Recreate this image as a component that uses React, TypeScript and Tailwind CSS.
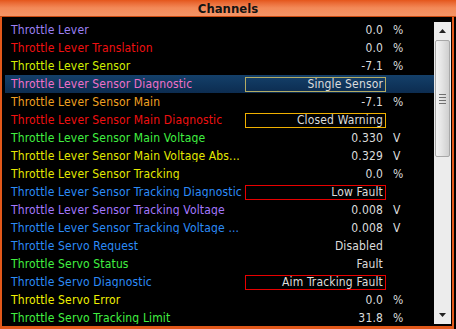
import React from "react";

type BoxTone = "khaki" | "gold" | "red";

type Row = {
  label: string;
  color: string;
  value: string;
  unit?: string;
  box?: BoxTone;
  selected?: boolean;
};

const rows: Row[] = [
  { label: "Throttle Lever", color: "text-[#9c80f4]", value: "0.0", unit: "%" },
  { label: "Throttle Lever Translation", color: "text-[#f01010]", value: "0.0", unit: "%" },
  { label: "Throttle Lever Sensor", color: "text-[#d4f000]", value: "-7.1", unit: "%" },
  { label: "Throttle Lever Sensor Diagnostic", color: "text-[#f070c8]", value: "Single Sensor", box: "khaki", selected: true },
  { label: "Throttle Lever Sensor Main", color: "text-[#f0a020]", value: "-7.1", unit: "%" },
  { label: "Throttle Lever Sensor Main Diagnostic", color: "text-[#f01010]", value: "Closed Warning", box: "gold" },
  { label: "Throttle Lever Sensor Main Voltage", color: "text-[#40f040]", value: "0.330", unit: "V" },
  { label: "Throttle Lever Sensor Main Voltage Abs...", color: "text-[#e4e800]", value: "0.329", unit: "V" },
  { label: "Throttle Lever Sensor Tracking", color: "text-[#e4e800]", value: "0.0", unit: "%" },
  { label: "Throttle Lever Sensor Tracking Diagnostic", color: "text-[#2c8cf8]", value: "Low Fault", box: "red" },
  { label: "Throttle Lever Sensor Tracking Voltage", color: "text-[#a478ff]", value: "0.008", unit: "V" },
  { label: "Throttle Lever Sensor Tracking Voltage ...", color: "text-[#2c8cf8]", value: "0.008", unit: "V" },
  { label: "Throttle Servo Request", color: "text-[#2c8cf8]", value: "Disabled" },
  { label: "Throttle Servo Status", color: "text-[#40f040]", value: "Fault" },
  { label: "Throttle Servo Diagnostic", color: "text-[#2c8cf8]", value: "Aim Tracking Fault", box: "red" },
  { label: "Throttle Servo Error", color: "text-[#f0f000]", value: "0.0", unit: "%" },
  { label: "Throttle Servo Tracking Limit", color: "text-[#40f040]", value: "31.8", unit: "%" },
];

const ScrollBar: React.FC = () => (
  <div className="w-[17px] shrink-0 mt-[5px] mb-[2px] bg-[#ececec] flex flex-col">
    <div className="h-[18px] flex items-center justify-center">
      <svg width="7" height="4" viewBox="0 0 7 4">
        <path d="M3.5 0 L7 4 L0 4 Z" fill="#222" />
      </svg>
    </div>
    <div className="h-[117px] mx-[1px] rounded-[2px] border border-[#a8a8a8] bg-gradient-to-r from-[#f4f4f4] via-[#e2e2e2] to-[#cfcfcf] flex flex-col items-center justify-center gap-[2px]">
      <div className="w-[7px] h-[1px] bg-[#707070]" />
      <div className="w-[7px] h-[1px] bg-[#707070]" />
      <div className="w-[7px] h-[1px] bg-[#707070]" />
      <div className="w-[7px] h-[1px] bg-[#707070]" />
    </div>
    <div className="flex-1" />
    <div className="h-[18px] flex items-center justify-center">
      <svg width="7" height="4" viewBox="0 0 7 4">
        <path d="M0 0 L7 0 L3.5 4 Z" fill="#222" />
      </svg>
    </div>
  </div>
);

const ValueCell: React.FC<{ row: Row }> = ({ row }) => {
  const boxCls =
    row.box === "khaki"
      ? "border-[#b4ac64]"
      : row.box === "gold"
        ? "border-[#f0b000]"
        : row.box === "red"
          ? "border-[#e80000]"
          : "border-transparent";

  return (
    <div
      className={`w-[141px] h-[15px] ml-[2px] border flex items-center justify-end pr-[2px] text-[#dcdcdc] ${boxCls}`}
    >
      {row.value}
    </div>
  );
};

const ChannelRow: React.FC<{ row: Row }> = ({ row }) => (
  <div
    className={`h-[18px] flex items-center shrink-0 ${
      row.selected ? "bg-gradient-to-b from-[#14406a] to-[#0c2c50]" : ""
    }`}
  >
    <div className={`w-[238px] pl-[6px] whitespace-nowrap overflow-hidden ${row.color}`}>{row.label}</div>
    <ValueCell row={row} />
    <div className="flex-1 pl-[7px] text-[#dcdcdc]">{row.unit}</div>
  </div>
);

export default function App() {
  return (
    <div
      className="w-[456px] h-[329px] bg-black flex flex-col overflow-hidden text-[12px] leading-none tracking-[0.15px]"
      style={{ fontFamily: '"DejaVu Sans Condensed", "DejaVu Sans", sans-serif' }}
    >
      <div className="h-[17px] shrink-0 bg-gradient-to-b from-[#e4561a] via-[#f38a58] to-[#f49466] border-b border-[#c84a10] flex items-center justify-center">
        <span className="font-bold text-[13px] tracking-normal text-[#141414]">Channels</span>
      </div>
      <div className="flex-1 min-h-0 flex border-l-2 border-r-2 border-b-[3px] border-[#e2581a] mr-[2px]">
        <div className="flex-1 min-w-0 ml-[3px] pt-[4px] flex flex-col overflow-hidden">
          {rows.map((r) => (
            <ChannelRow key={r.label} row={r} />
          ))}
        </div>
        <ScrollBar />
        <div className="w-[1px]" />
      </div>
    </div>
  );
}
